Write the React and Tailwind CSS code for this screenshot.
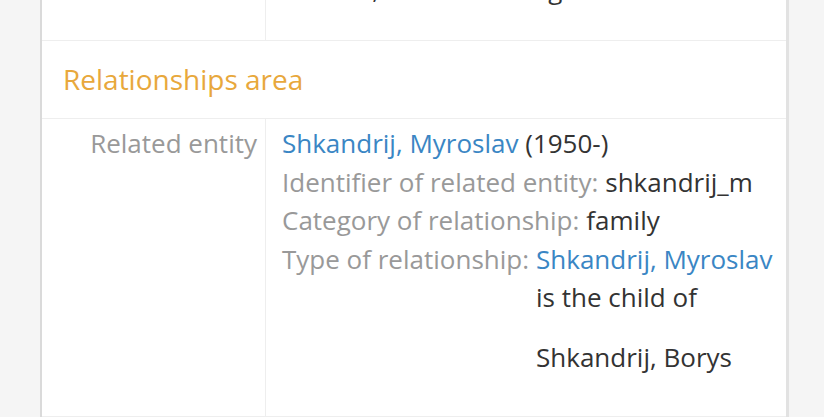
import React from 'react';

const Field = ({ label, children }) => (
  <div className="flex whitespace-nowrap">
    <span className="text-[#999]">{label}</span>
    <span className="ml-[7px] text-[#333]">{children}</span>
  </div>
);

const App = () => {
  return (
    <div className="h-[417px] w-[824px] overflow-hidden bg-[#f5f5f5] font-['Open_Sans',sans-serif] text-[26px] leading-[38.5px]">
      <div className="ml-[40px] h-full w-[749px] border-l-2 border-r-[3px] border-l-[#dadada] border-r-[#e2e2e2] bg-white">
        {/* tail of the previous row */}
        <div className="flex h-[40px] overflow-hidden">
          <div className="w-[224px] shrink-0 border-r border-[#eeeeee]" />
          <div className="-mt-[30px] pl-[16px] text-[#333] whitespace-nowrap">Kharkiv, then Hamburg</div>
        </div>

        {/* section header */}
        <div className="flex h-[78px] items-center border-t border-[#eeeeee] pl-[21px]">
          <h2 className="text-[28px] font-normal text-[#e8a83c]">Relationships area</h2>
        </div>

        {/* related entity */}
        <div className="flex h-[299px] border-y border-[#eeeeee]">
          <div className="w-[224px] shrink-0 border-r border-[#eeeeee] pr-[8px] pt-[5px] text-right text-[#999]">
            Related entity
          </div>
          <div className="pl-[16px] pt-[5px] text-[#333]">
            <div className="whitespace-nowrap">
              <a href="#" className="text-[#3a86c4]">Shkandrij, Myroslav</a> (1950-)
            </div>
            <Field label="Identifier of related entity:">shkandrij_m</Field>
            <Field label="Category of relationship:">family</Field>
            <div className="flex whitespace-nowrap">
              <span className="text-[#999]">Type of relationship:</span>
              <div className="ml-[7px] text-[#333]">
                <a href="#" className="block text-[#3a86c4]">Shkandrij, Myroslav</a>
                <div>is the child of</div>
                <div className="mt-[21px]">Shkandrij, Borys</div>
              </div>
            </div>
          </div>
        </div>
      </div>
    </div>
  );
};

export default App;
